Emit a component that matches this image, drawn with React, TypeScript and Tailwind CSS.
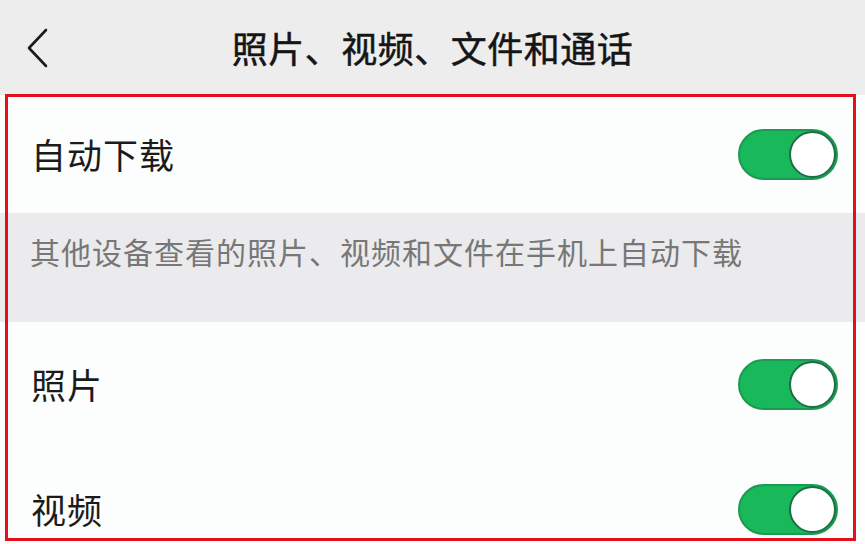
const Toggle = () => (
  <div className="w-[100px] h-[51px] rounded-full bg-[#19b85a] border-2 border-[#1a9a52] flex items-center justify-end">
    <div className="w-[47px] h-[47px] rounded-full bg-white border-2 border-[#1c6e44]" />
  </div>
);

const Row = ({ label, h }: { label: string; h: string }) => (
  <div className={`${h} bg-[#fcfdfd] flex items-center justify-between pl-[31px] pr-[27px]`}>
    <span className="text-[35px] text-[#1b1b1b] tracking-[1px]">{label}</span>
    <Toggle />
  </div>
);

export default function App() {
  return (
    <div className="relative w-[865px] h-[544px] bg-white overflow-hidden font-['Noto_Sans_CJK_SC',sans-serif]">
      <header className="h-[95px] bg-[#ededee] grid grid-cols-[1fr_auto_1fr] items-center">
        <div className="pl-[26px] flex items-center">
          <svg width="22" height="40" viewBox="0 0 22 40" fill="none">
            <path d="M20 2 L3 20 L20 38" stroke="#1a1a1a" strokeWidth="2.6" strokeLinecap="round" strokeLinejoin="round" />
          </svg>
        </div>
        <h1 className="text-[36px] text-[#151515] font-normal tracking-[0.5px] pb-[2px] [-webkit-text-stroke:0.5px_#151515]">
          照片、视频、文件和通话
        </h1>
        <div />
      </header>

      <Row label="自动下载" h="h-[118px]" />

      <div className="h-[109px] bg-[#ebebed] pt-[16px] pl-[30px]">
        <p className="text-[30px] text-[#777] tracking-[1px]">其他设备查看的照片、视频和文件在手机上自动下载</p>
      </div>

      <Row label="照片" h="h-[125px]" />
      <Row label="视频" h="h-[125px]" />

      <div className="absolute left-[5px] top-[94px] w-[851px] h-[447px] border-[3px] border-[#e3101c] pointer-events-none" />
    </div>
  );
}
